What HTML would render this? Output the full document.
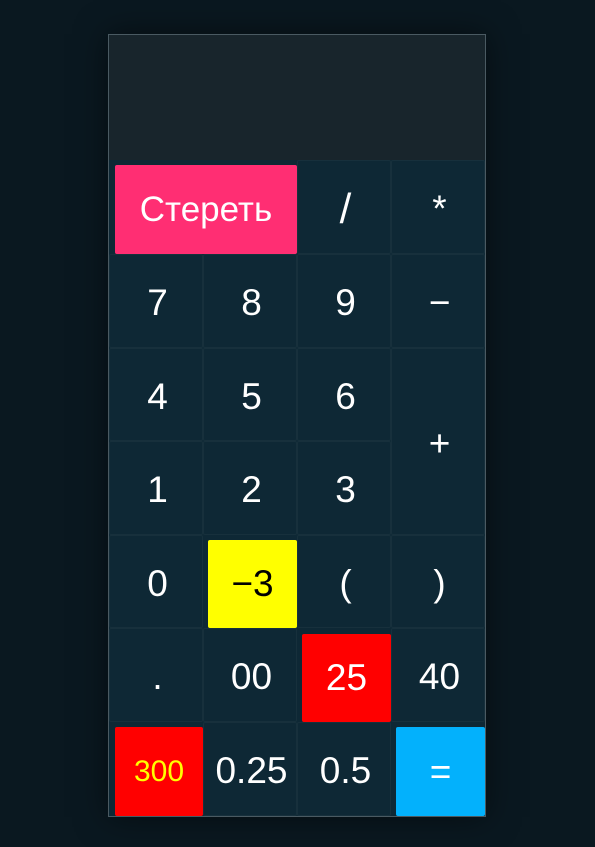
<!DOCTYPE html>
<html><head><meta charset="utf-8"><style>
html,body{margin:0;padding:0;}
body{width:595px;height:847px;background:#0a1820;position:relative;overflow:hidden;font-family:"Liberation Sans",sans-serif;}
.calc{position:absolute;left:108px;top:34px;width:376px;height:781px;border:1px solid #4a5a62;background:#0e2835;box-shadow:0 0 30px rgba(0,0,0,.5);}
.disp{position:absolute;left:109px;top:35px;width:376px;height:125px;background:#18252c;}
.b{position:absolute;box-sizing:border-box;border:1px solid #17303c;border-radius:2px;background:#0e2835;color:#fff;font-size:37px;display:flex;align-items:center;justify-content:center;padding-top:4px;padding-left:3px;}
.c{padding:0;border:none;}
</style></head><body>
<div class="calc"></div>
<div class="disp"></div>
<div class="b" style="left:109px;top:160px;width:188px;height:94px;border:none;background:#0e2835"></div>
<div class="b c" style="left:115px;top:165px;width:182px;height:89px;background:#ff2e73;font-size:35px">Стереть</div>
<div class="b" style="left:297px;top:160px;width:94px;height:94px;font-size:42px">/</div>
<div class="b" style="left:391px;top:160px;width:94px;height:94px">*</div>

<div class="b" style="left:109px;top:254px;width:94px;height:94px">7</div>
<div class="b" style="left:203px;top:254px;width:94px;height:94px">8</div>
<div class="b" style="left:297px;top:254px;width:94px;height:94px">9</div>
<div class="b" style="left:391px;top:254px;width:94px;height:94px">−</div>

<div class="b" style="left:109px;top:348px;width:94px;height:93px">4</div>
<div class="b" style="left:203px;top:348px;width:94px;height:93px">5</div>
<div class="b" style="left:297px;top:348px;width:94px;height:93px">6</div>
<div class="b" style="left:391px;top:348px;width:94px;height:187px">+</div>

<div class="b" style="left:109px;top:441px;width:94px;height:94px">1</div>
<div class="b" style="left:203px;top:441px;width:94px;height:94px">2</div>
<div class="b" style="left:297px;top:441px;width:94px;height:94px">3</div>

<div class="b" style="left:109px;top:535px;width:94px;height:93px">0</div>
<div class="b c" style="left:208px;top:540px;width:89px;height:88px;background:#ffff00;color:#000">−3</div>
<div class="b" style="left:297px;top:535px;width:94px;height:93px">(</div>
<div class="b" style="left:391px;top:535px;width:94px;height:93px">)</div>

<div class="b" style="left:109px;top:628px;width:94px;height:94px">.</div>
<div class="b" style="left:203px;top:628px;width:94px;height:94px">00</div>
<div class="b c" style="left:302px;top:634px;width:89px;height:88px;background:#ff0000">25</div>
<div class="b" style="left:391px;top:628px;width:94px;height:94px">40</div>

<div class="b c" style="left:115px;top:727px;width:88px;height:89px;background:#ff0000;color:#ffff00;font-size:30px">300</div>
<div class="b" style="left:203px;top:722px;width:94px;height:94px">0.25</div>
<div class="b" style="left:297px;top:722px;width:94px;height:94px">0.5</div>
<div class="b c" style="left:396px;top:727px;width:89px;height:89px;background:#03b1fc">=</div>
</body></html>
